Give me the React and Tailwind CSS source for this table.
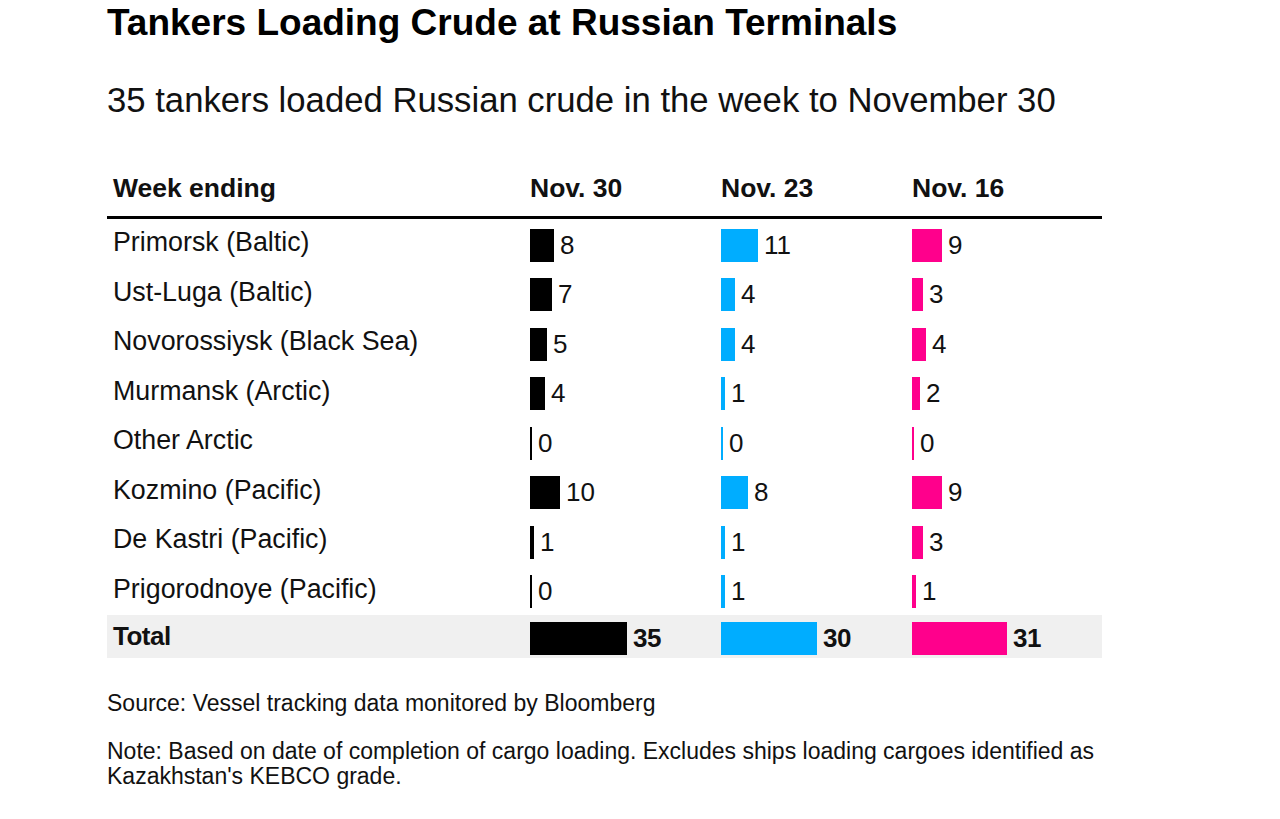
const rows = [
  { name: "Primorsk (Baltic)", v: [[8, 24], [11, 37], [9, 30]] },
  { name: "Ust-Luga (Baltic)", v: [[7, 22], [4, 14], [3, 11]] },
  { name: "Novorossiysk (Black Sea)", v: [[5, 17], [4, 14], [4, 14]] },
  { name: "Murmansk (Arctic)", v: [[4, 15], [1, 4], [2, 8]] },
  { name: "Other Arctic", v: [[0, 2], [0, 2], [0, 2]] },
  { name: "Kozmino (Pacific)", v: [[10, 30], [8, 27], [9, 30]] },
  { name: "De Kastri (Pacific)", v: [[1, 4], [1, 4], [3, 11]] },
  { name: "Prigorodnoye (Pacific)", v: [[0, 2], [1, 4], [1, 4]] },
];

const colors = ["bg-black", "bg-[#00adff]", "bg-[#ff008c]"];
const totals = [[35, 97], [30, 96], [31, 95]];

function Bar({ value, width, color, bold }) {
  return (
    <div className="flex items-center">
      <div className={`${color} h-[33px]`} style={{ width }} />
      <span className={`ml-[6px] text-[26px] ${bold ? "font-bold tracking-[-0.5px]" : ""}`}>{value}</span>
    </div>
  );
}

export default function App() {
  return (
    <div className="min-h-[819px] bg-white text-[#111]" style={{ fontFamily: '"Liberation Sans", Arial, sans-serif' }}>
      <div className="ml-[107px] w-[995px]">
        <h1 className="pt-[1px] text-[37px] font-bold leading-[44px] text-black">
          Tankers Loading Crude at Russian Terminals
        </h1>
        <p className="mt-[33px] text-[34.7px] leading-[44px]">
          35 tankers loaded Russian crude in the week to November 30
        </p>

        <div className="mt-[36px]">
          <div className="grid h-[61px] grid-cols-[423px_191px_191px_1fr] items-center border-b-[3px] border-black pt-[3px] text-[26.5px] font-bold">
            <div className="pl-[6px]">Week ending</div>
            <div>Nov. 30</div>
            <div>Nov. 23</div>
            <div>Nov. 16</div>
          </div>

          {rows.map((r) => (
            <div key={r.name} className="grid h-[49.5px] grid-cols-[423px_191px_191px_1fr] items-center pt-[3px]">
              <div className="-mt-[6px] pl-[6px] text-[26.8px]">{r.name}</div>
              {r.v.map(([value, width], i) => (
                <Bar key={i} value={value} width={width} color={colors[i]} />
              ))}
            </div>
          ))}

          {/* Total row */}
          <div className="grid h-[43px] grid-cols-[423px_191px_191px_1fr] items-end bg-[#f0f0f0]">
            <div className="self-center pl-[6px] text-[26px] font-bold tracking-[-0.5px]">Total</div>
            {totals.map(([value, width], i) => (
              <Bar key={i} value={value} width={width} color={colors[i]} bold />
            ))}
          </div>
        </div>

        <p className="mt-[33px] text-[23px] leading-[25px]">
          Source: Vessel tracking data monitored by Bloomberg
        </p>
        <p className="mt-[23px] text-[23px] leading-[25px]">
          Note: Based on date of completion of cargo loading. Excludes ships loading cargoes identified as
          <br />
          Kazakhstan's KEBCO grade.
        </p>
      </div>
    </div>
  );
}
